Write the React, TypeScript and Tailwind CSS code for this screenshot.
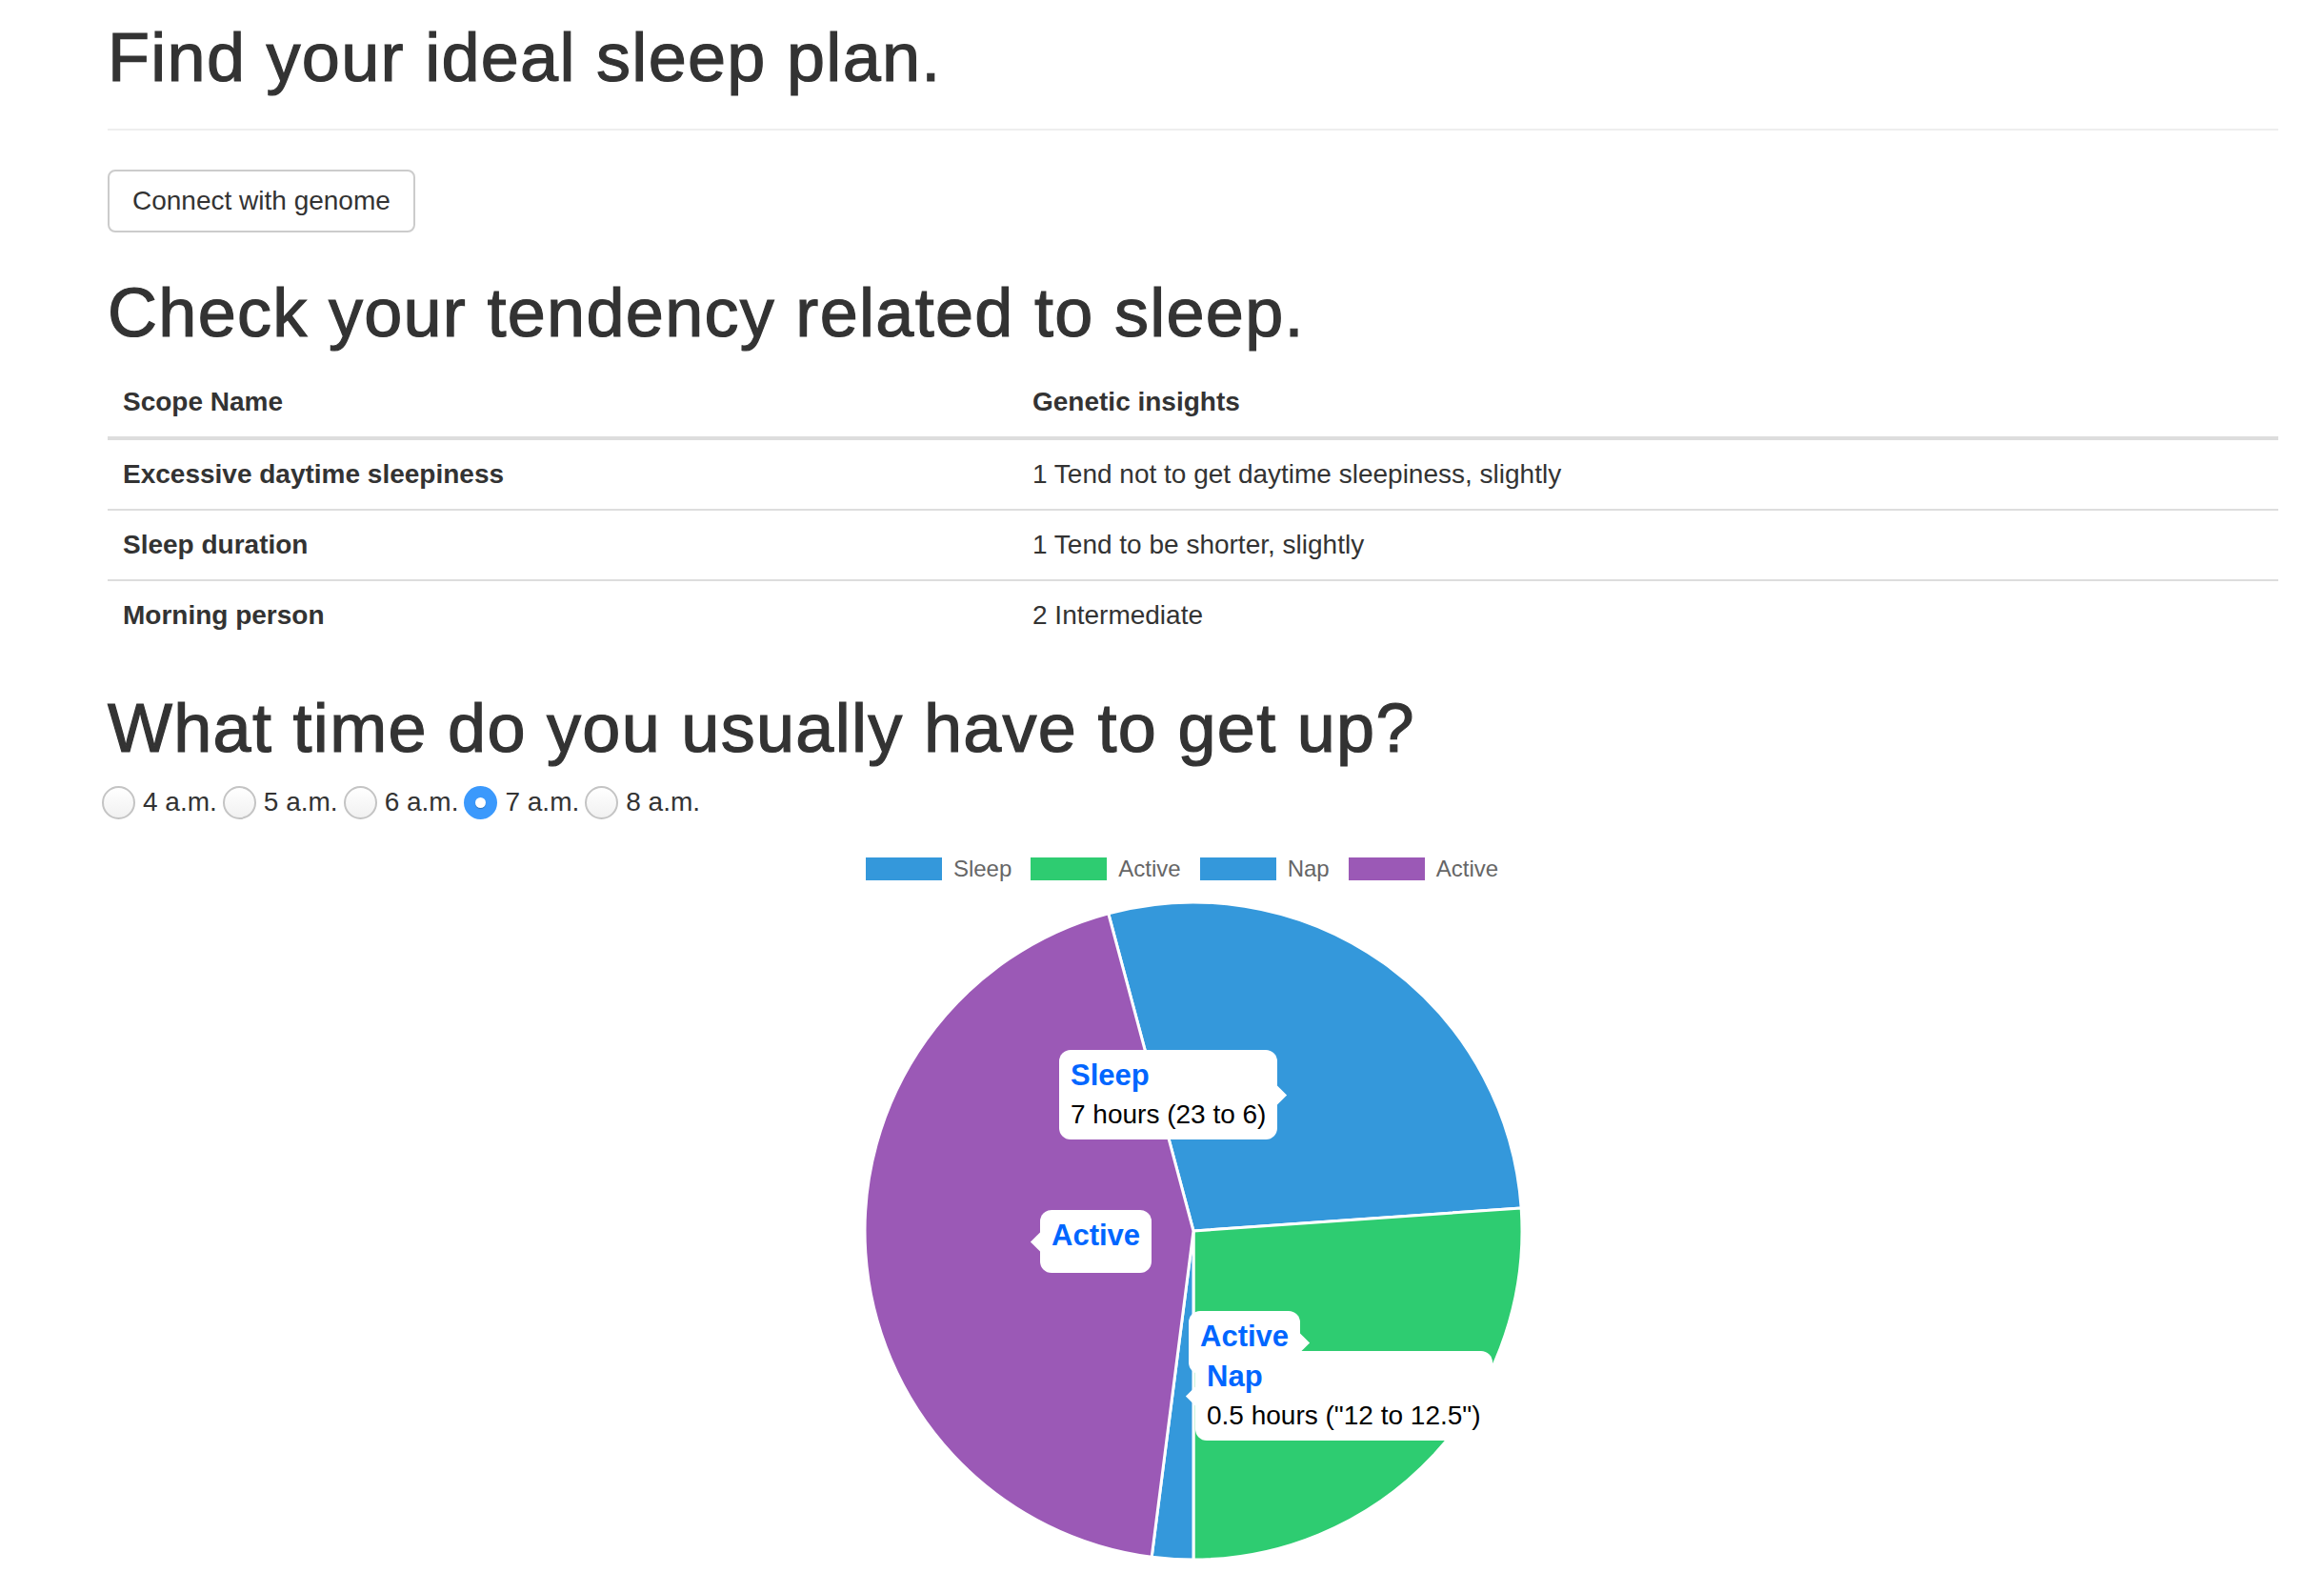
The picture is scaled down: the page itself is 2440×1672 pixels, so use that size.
import React from "react";

// pie slices, angles in degrees clockwise from 12 o'clock (24h clock face)
const slices = [
  { from: 345, to: 446, color: "#3498db" },
  { from: 86, to: 180, color: "#2ecc71" },
  { from: 180, to: 187.3, color: "#3498db" },
  { from: 187.3, to: 345, color: "#9b59b6" },
];

const legend = [
  { label: "Sleep", color: "bg-[#3498db]" },
  { label: "Active", color: "bg-[#2ecc71]" },
  { label: "Nap", color: "bg-[#3498db]" },
  { label: "Active", color: "bg-[#9b59b6]" },
];

const rows = [
  { scope: "Excessive daytime sleepiness", insight: "1 Tend not to get daytime sleepiness, slightly" },
  { scope: "Sleep duration", insight: "1 Tend to be shorter, slightly" },
  { scope: "Morning person", insight: "2 Intermediate" },
];

const times = ["4 a.m.", "5 a.m.", "6 a.m.", "7 a.m.", "8 a.m."];

const CX = 350;
const CY = 350;
const R = 345;

function point(deg: number) {
  const a = (deg * Math.PI) / 180;
  return [CX + R * Math.sin(a), CY - R * Math.cos(a)];
}

function arcPath(from: number, to: number) {
  const [x1, y1] = point(from);
  const [x2, y2] = point(to);
  const large = to - from > 180 ? 1 : 0;
  return `M ${CX} ${CY} L ${x1} ${y1} A ${R} ${R} 0 ${large} 1 ${x2} ${y2} Z`;
}

function Tooltip({
  title,
  body,
  side,
  className,
}: {
  title: string;
  body?: string;
  side: "left" | "right";
  className: string;
}) {
  return (
    <div className={`absolute bg-white rounded-[12px] px-[12px] pt-[12px] whitespace-nowrap ${body ? "pb-[12px]" : "pb-[24px]"} ${className}`}>
      <div
        className={`absolute top-1/2 -mt-[7px] w-[15px] h-[15px] rotate-45 bg-white ${side === "right" ? "-right-[7px]" : "-left-[7px]"}`}
      />
      <div className="relative text-[31px] leading-[30px] font-bold text-[#0066ff]">{title}</div>
      {body && <div className="relative mt-[12px] text-[28px] leading-[28px] text-black">{body}</div>}
    </div>
  );
}

function Radio({ checked }: { checked: boolean }) {
  if (checked) {
    return (
      <span className="flex items-center justify-center w-[35px] h-[35px] rounded-full bg-[#3b99fc] shrink-0">
        <span className="w-[11px] h-[11px] rounded-full bg-white shadow-[0_1px_1px_rgba(0,0,0,0.25)]" />
      </span>
    );
  }
  return (
    <span className="w-[35px] h-[35px] rounded-full border-2 border-[#c4c4c4] bg-gradient-to-b from-white to-[#f1f1f1] shrink-0" />
  );
}

const heading = "pt-[5px] text-[72px] leading-[79px] tracking-[1.3px] font-normal [-webkit-text-stroke:1.2px_#333]";

export default function App() {
  const selected = "7 a.m.";

  return (
    <div className="min-h-[1672px] bg-white text-[#333] font-['Liberation_Sans',Arial,sans-serif]">
      <div className="ml-[113px] w-[2279px] pt-[16px]">
        <div className="pb-[35px] border-b-2 border-[#eeeeee]">
          <h1 className={heading}>Find your ideal sleep plan.</h1>
        </div>

        <button className="mt-[41px] block bg-white border-2 border-[#cccccc] rounded-[8px] px-[24px] py-[11px] text-[28px] leading-[40px] text-[#333]">
          Connect with genome
        </button>

        <h1 className={`mt-[40px] ${heading}`}>Check your tendency related to sleep.</h1>

        <table className="mt-[18px] w-full border-collapse text-[28px] leading-[40px]">
          <thead>
            <tr className="border-b-4 border-[#dddddd]">
              <th className="w-[955px] text-left font-bold px-[16px] py-[16px]">Scope Name</th>
              <th className="text-left font-bold px-[16px] py-[16px]">Genetic insights</th>
            </tr>
          </thead>
          <tbody>
            {rows.map((row, i) => (
              <tr key={row.scope} className={i > 0 ? "border-t-2 border-[#dddddd]" : ""}>
                <td className="font-bold px-[16px] py-[16px]">{row.scope}</td>
                <td className="px-[16px] py-[16px]">{row.insight}</td>
              </tr>
            ))}
          </tbody>
        </table>

        <h1 className={`mt-[38px] ${heading}`}>What time do you usually have to get up?</h1>

        {/* wake-up time */}
        <div className="mt-[18px] -ml-[6px] flex items-center h-[40px] text-[28px]">
          {times.map((t) => (
            <label key={t} className="flex items-center mr-[6px]">
              <Radio checked={t === selected} />
              <span className="ml-[8px]">{t}</span>
            </label>
          ))}
        </div>

        {/* chart */}
        <div className="relative pt-[38px] pb-[20px]">
          <div className="flex justify-center pr-[23px] gap-[20px]">
            {legend.map((item, i) => (
              <div key={i} className="flex items-center gap-[12px] h-[24px]">
                <span className={`w-[80px] h-[24px] ${item.color}`} />
                <span className="text-[24px] leading-[24px] text-[#666]">{item.label}</span>
              </div>
            ))}
          </div>

          <svg width="700" height="700" viewBox="0 0 700 700" className="block mx-auto mt-[18px]">
            {slices.map((s, i) => (
              <path key={i} d={arcPath(s.from, s.to)} fill={s.color} stroke="#ffffff" strokeWidth="3" strokeLinejoin="round" />
            ))}
          </svg>

          <Tooltip title="Sleep" body="7 hours (23 to 6)" side="right" className="left-[999px] top-[240px]" />
          <Tooltip title="Active" side="right" className="left-[1135px] top-[514px]" />
          <Tooltip title="Nap" body={'0.5 hours ("12 to 12.5")'} side="left" className="left-[1142px] top-[556px]" />
          <Tooltip title="Active" side="left" className="left-[979px] top-[408px]" />
        </div>
      </div>
    </div>
  );
}
